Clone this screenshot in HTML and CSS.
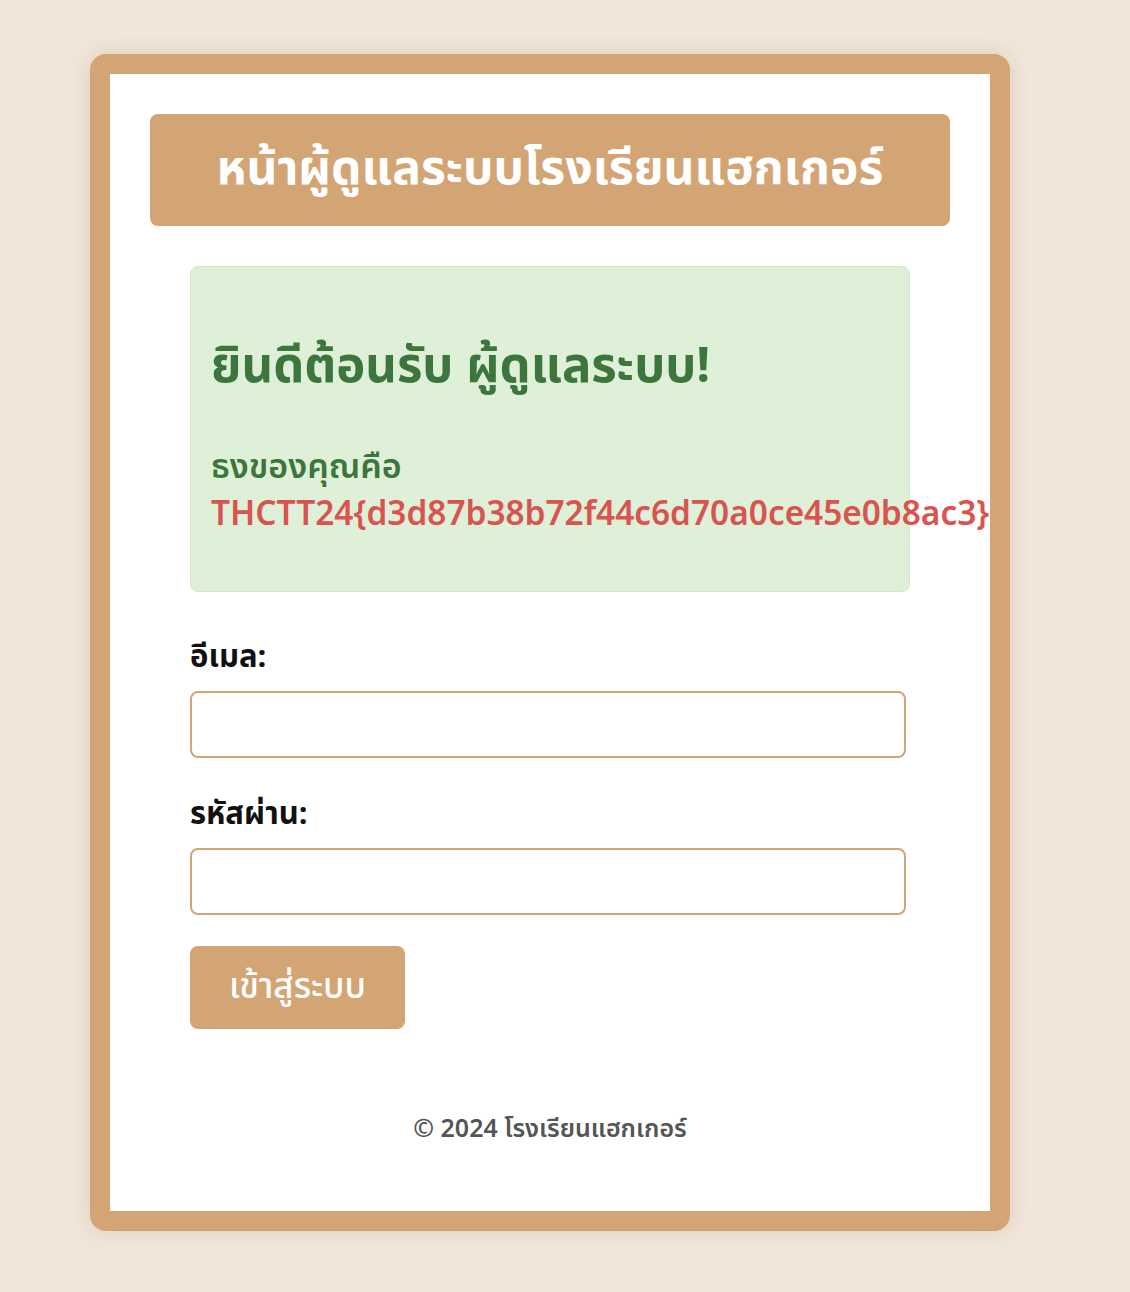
FILE: index.html
```html
<!DOCTYPE html>
<html lang="th">
<head>
<meta charset="utf-8">
<title>หน้าผู้ดูแลระบบโรงเรียนแฮกเกอร์</title>
<link rel="stylesheet" href="styles.css">
</head>
<body>
<div class="card">
  <header class="banner">
    <h1 class="banner-title">หน้าผู้ดูแลระบบโรงเรียนแฮกเกอร์</h1>
  </header>
  <main class="content">
    <div class="alert">
      <h2 class="alert-title">ยินดีต้อนรับ ผู้ดูแลระบบ!</h2>
      <p class="alert-text">ธงของคุณคือ <span class="flag">THCTT24{d3d87b38b72f44c6d70a0ce45e0b8ac3}</span></p>
    </div>
    <form class="login">
      <label class="field-label" for="email">อีเมล:</label>
      <input class="field-input" type="email" id="email">
      <label class="field-label" for="password">รหัสผ่าน:</label>
      <input class="field-input" type="password" id="password">
      <button class="submit" type="button">เข้าสู่ระบบ</button>
    </form>
  </main>
  <footer class="footer">© 2024 โรงเรียนแฮกเกอร์</footer>
</div>
</body>
</html>
```
FILE: styles.css
```css
html, body {
  margin: 0;
  padding: 0;
}
body {
  background: #f1e6da;
  font-family: "Noto Sans Thai", "Noto Sans", "DejaVu Sans", sans-serif;
  min-height: 1292px;
  padding-top: 54px;
  box-sizing: border-box;
}
.card {
  width: 800px;
  margin-left: 90px;
  background: #fff;
  border: 20px solid #d4a574;
  border-radius: 16px;
  padding: 40px;
  box-shadow: 0 0 20px rgba(120, 90, 50, 0.18);
}
.banner {
  background: #d4a574;
  border-radius: 8px;
  height: 112px;
  display: flex;
  align-items: center;
  justify-content: center;
}
.banner-title {
  margin: 0;
  color: #fff;
  font-size: 48px;
  font-weight: 700;
  line-height: 1;
}
.content {
  padding: 40px 40px 0;
}
.alert {
  box-sizing: border-box;
  height: 326px;
  background: #dff0d8;
  border: 1px solid #d3e8c8;
  border-radius: 8px;
  padding: 72px 20px 0;
}
.alert-title {
  margin: 0 0 49px;
  color: #3c763d;
  font-size: 49px;
  font-weight: 700;
  line-height: 56px;
}
.alert-text {
  margin: 0;
  color: #3c763d;
  font-size: 34px;
  font-weight: 600;
  line-height: 47px;
}
.flag {
  color: #d9534f;
  font-size: 33.4px;
  white-space: nowrap;
}
.login {
  display: flex;
  flex-direction: column;
  align-items: flex-start;
  padding-top: 46px;
}
.field-label {
  font-size: 31px;
  font-weight: 700;
  line-height: 40px;
  color: #111;
  margin-bottom: 13px;
}
.field-input {
  box-sizing: border-box;
  width: 716px;
  height: 67px;
  border: 2px solid #d2a676;
  border-radius: 8px;
  margin: 0 0 37px;
  font-size: 20px;
  padding: 0 14px;
}
.field-input:last-of-type {
  margin-bottom: 31px;
}
.submit {
  width: 215px;
  height: 83px;
  background: #d4a574;
  color: #fff;
  border: none;
  border-radius: 8px;
  font-family: inherit;
  font-size: 35px;
  font-weight: 500;
}
.footer {
  margin-top: 82px;
  text-align: center;
  color: #555;
  font-size: 25px;
  font-weight: 600;
  line-height: 36px;
  padding-bottom: 24px;
}
```
